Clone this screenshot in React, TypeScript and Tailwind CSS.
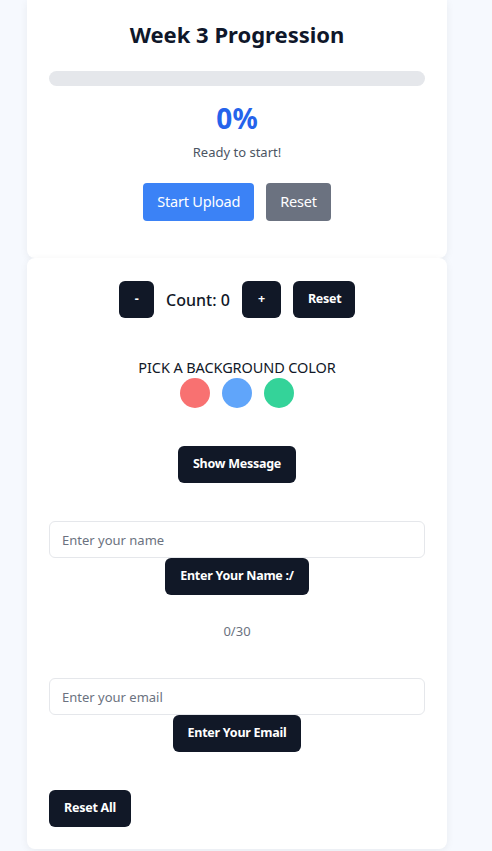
import React, { useState } from "react";

export default function App() {
  const [count, setCount] = useState(0);
  const [name, setName] = useState("");
  const [email, setEmail] = useState("");
  const [progress, setProgress] = useState(0);
  const font = { fontFamily: '"Noto Sans", "Open Sans", sans-serif' };
  const btn =
    "h-[37px] px-[15px] rounded-md bg-[#111827] text-white text-[12.5px] font-bold tracking-[-0.25px]";
  return (
    <div className="min-h-screen bg-[#f6f9fe] w-[492px]" style={font}>
      <div className="w-[420px] ml-[27px]">
        <div className="bg-white rounded-b-lg shadow-[0_2px_8px_rgba(0,0,0,0.06)] px-[22px] pt-[18px] pb-[37px] flex flex-col items-center">
          <h1 className="text-[22px] leading-[32px] font-bold text-[#0f172a]">Week 3 Progression</h1>
          <div className="w-full h-[15px] rounded-full bg-[#e5e7eb] mt-[21px] overflow-hidden">
            <div className="h-full bg-blue-500" style={{ width: `${progress}%` }} />
          </div>
          <div className="mt-[14px] text-[28px] leading-[36px] font-bold text-[#2563eb]">{progress}%</div>
          <div className="text-[13px] leading-[20px] text-[#4b5563] mt-[6px]">Ready to start!</div>
          <div className="flex gap-3 mt-[21px]">
            <button className="h-[38px] px-[14px] rounded bg-[#3b82f6] text-white text-[14.5px] tracking-[-0.2px]" onClick={() => setProgress(0)}>
              Start Upload
            </button>
            <button className="h-[38px] px-[14px] rounded bg-[#6b7280] text-white text-[14.5px] tracking-[-0.2px]" onClick={() => setProgress(0)}>
              Reset
            </button>
          </div>
        </div>
        <div className="bg-white rounded-lg shadow-[0_2px_8px_rgba(0,0,0,0.06)] px-[22px] pt-[23px] pb-[22px] flex flex-col">
          <div className="flex items-center justify-center gap-3">
            <button className={`${btn} w-[35px] px-0`} onClick={() => setCount(count - 1)}>-</button>
            <span className="text-[16px] font-medium text-[#111827]">Count: {count}</span>
            <button className={`${btn} w-[39px] px-0`} onClick={() => setCount(count + 1)}>+</button>
            <button className={`${btn} w-[62px] px-0`} onClick={() => setCount(0)}>Reset</button>
          </div>
          <div className="mt-[37px] text-center text-[14.5px] leading-[24px] text-[#111827] uppercase tracking-[-0.1px]">Pick a background color</div>
          <div className="flex justify-center gap-3 -mt-[1px]">
            <span className="w-[30px] h-[30px] rounded-full bg-[#f87171]" />
            <span className="w-[30px] h-[30px] rounded-full bg-[#60a5fa]" />
            <span className="w-[30px] h-[30px] rounded-full bg-[#34d399]" />
          </div>
          <div className="flex justify-center mt-[38px]">
            <button className={btn}>Show Message</button>
          </div>
          <input
            className="mt-[38px] w-full h-[37px] rounded-md border border-[#e5e7eb] px-3 text-[13px] placeholder:text-[#6b7280] outline-none"
            placeholder="Enter your name"
            value={name}
            onChange={(e) => setName(e.target.value)}
          />
          <div className="flex justify-center">
            <button className={btn}>Enter Your Name :/</button>
          </div>
          <div className="mt-[26px] text-center text-[13px] leading-[20px] text-[#6b7280]">{name.length}/30</div>
          <input
            className="mt-[37px] w-full h-[37px] rounded-md border border-[#e5e7eb] px-3 text-[13px] placeholder:text-[#6b7280] outline-none"
            placeholder="Enter your email"
            value={email}
            onChange={(e) => setEmail(e.target.value)}
          />
          <div className="flex justify-center">
            <button className={btn}>Enter Your Email</button>
          </div>
          <div className="mt-[38px]">
            <button className={btn}>Reset All</button>
          </div>
        </div>
      </div>
    </div>
  );
}
